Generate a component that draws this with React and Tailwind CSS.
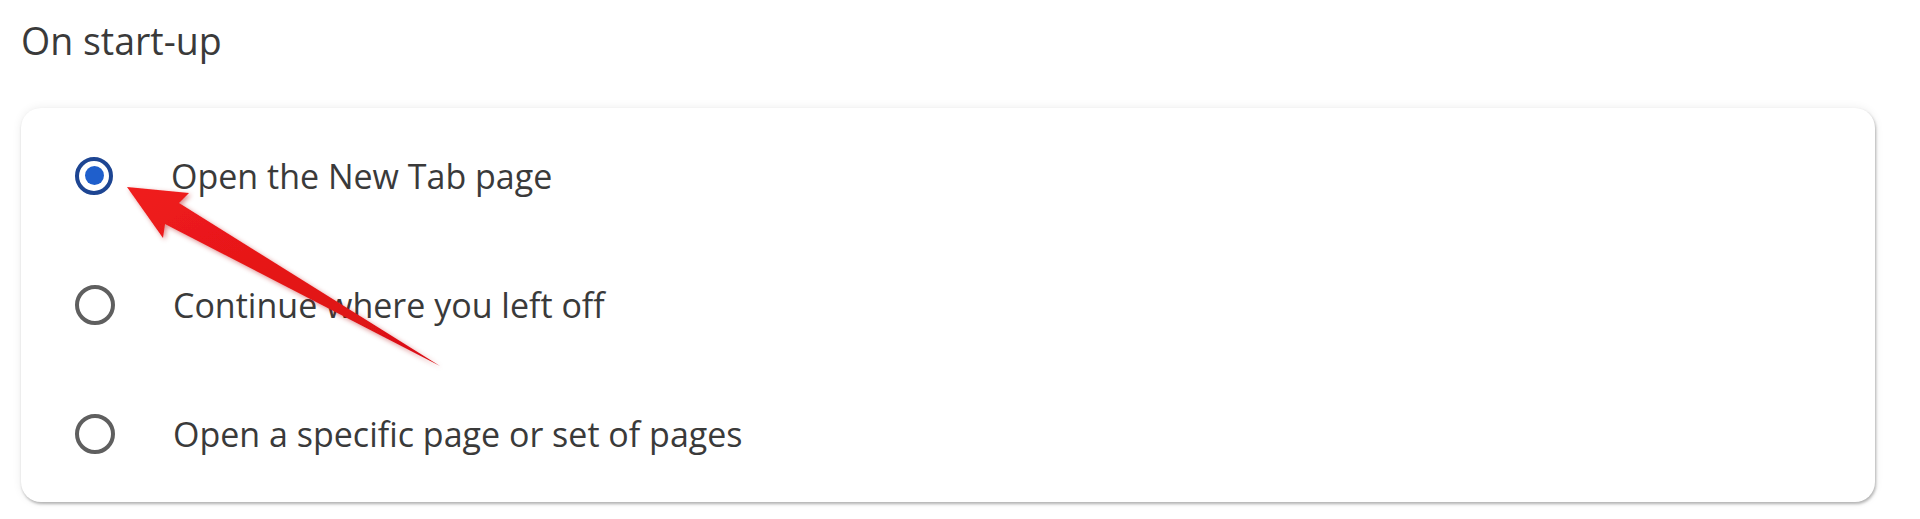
import React from 'react'

const options = [
  { label: 'Open the New Tab page', checked: true },
  { label: 'Continue where you left off', checked: false },
  { label: 'Open a specific page or set of pages', checked: false },
]

function Radio({ checked }) {
  if (checked) {
    return (
      <span className="flex h-[38px] w-[38px] shrink-0 items-center justify-center rounded-full border-[4px] border-[#1d4592]">
        <span className="h-[19px] w-[19px] rounded-full bg-[#1f5fcc]" />
      </span>
    )
  }
  return <span className="h-[40px] w-[40px] shrink-0 rounded-full border-[4px] border-[#5f5f5f]" />
}

function Arrow() {
  return (
    <svg className="pointer-events-none absolute left-0 top-0" width="1920" height="519" viewBox="0 0 1920 519">
      <defs>
        <filter id="glow" x="-20%" y="-20%" width="140%" height="140%">
          <feDropShadow dx="2" dy="2" stdDeviation="2.5" floodColor="#b00000" floodOpacity="0.45" />
        </filter>
        <linearGradient id="red" x1="0" y1="0" x2="1" y2="1">
          <stop offset="0" stopColor="#f01c1c" />
          <stop offset="1" stopColor="#d90f14" />
        </linearGradient>
      </defs>
      <polygon
        points="127,187 189,193 179,203 440,366 165,224 163,238"
        fill="url(#red)"
        filter="url(#glow)"
        strokeLinejoin="round"
      />
    </svg>
  )
}

export default function App() {
  return (
    <div className="relative h-[519px] w-[1920px] overflow-hidden bg-white font-['Open_Sans',sans-serif] text-[#3a3a3a]">
      <div className="px-[21px] pt-[17px]">
        <h2 className="h-[48px] text-[37.5px] leading-[48px]">On start-up</h2>
        <div className="mt-[43px] h-[394px] w-[1854px] rounded-[20px] bg-white pt-[3px] shadow-[1px_2px_3px_rgba(0,0,0,0.28),0_0_10px_rgba(0,0,0,0.08)]">
          {options.map(opt => (
            <label key={opt.label} className="flex h-[129px] items-center gap-[58px] pl-[54px]">
              <Radio checked={opt.checked} />
              <span className="text-[34px] leading-none">{opt.label}</span>
            </label>
          ))}
        </div>
      </div>
      <Arrow />
    </div>
  )
}
